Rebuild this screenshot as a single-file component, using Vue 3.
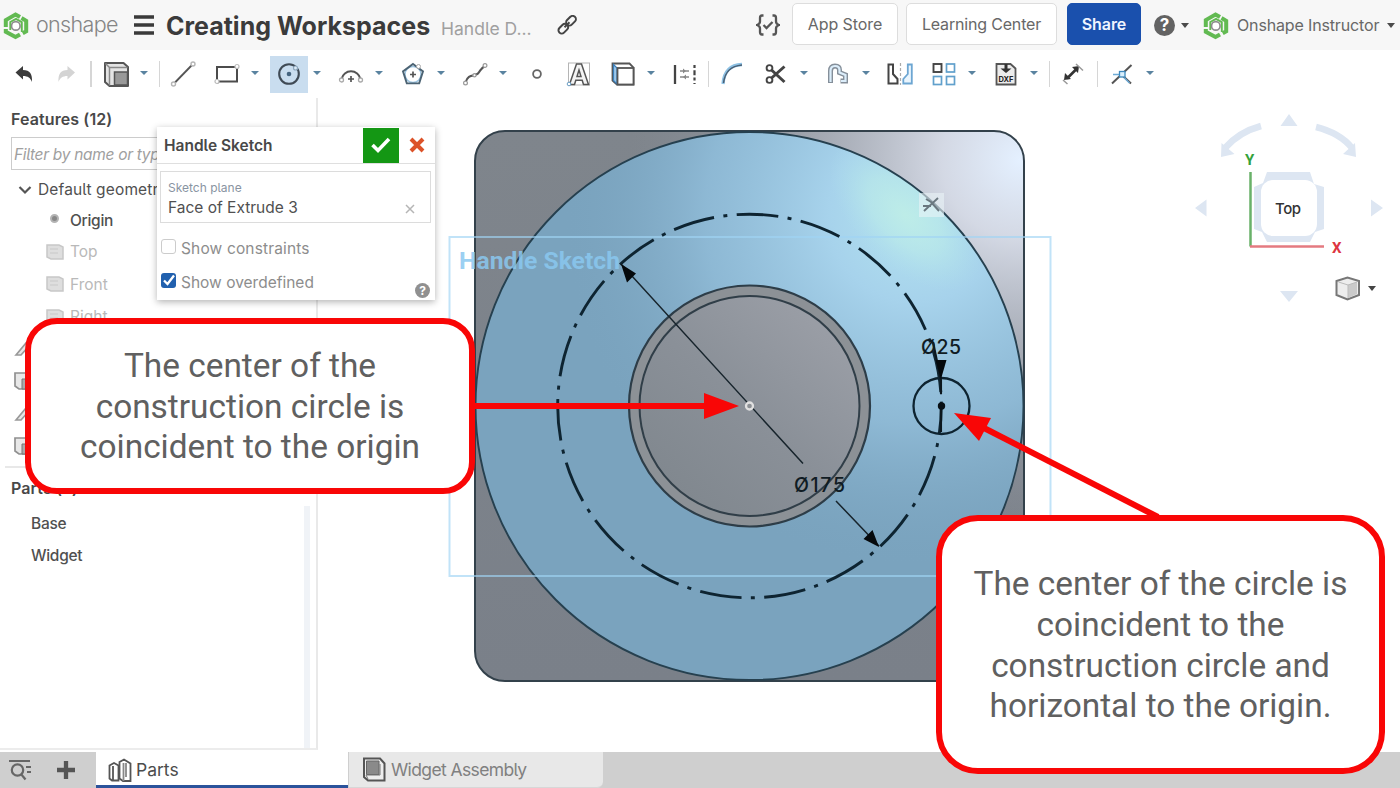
<script setup>
const tools = [
  { icon: 'undo' },
  { icon: 'redo' },
  { sep: 'w8' },
  { icon: 'sketch', menu: true },
  { sep: 'w5' },
  { icon: 'line', wide: true },
  { icon: 'rect', menu: true },
  { icon: 'circle', menu: true, active: true },
  { icon: 'arc', menu: true },
  { icon: 'polygon', menu: true },
  { icon: 'spline', menu: true },
  { icon: 'point' },
  { icon: 'text', wide: true },
  { icon: 'project', menu: true },
  { icon: 'dimension' },
  { sep: 'w5' },
  { icon: 'fillet', wide: true },
  { icon: 'trim', menu: true },
  { icon: 'offset', menu: true },
  { icon: 'mirror', wide: true },
  { icon: 'pattern', menu: true },
  { icon: 'dxf', menu: true },
  { sep: 'w5' },
  { icon: 'measure' },
  { sep: 'w7' },
  { icon: 'constraint', menu: true },
]
const planes = ['Top', 'Front', 'Right']
const steps = ['sk', 'ex', 'sk', 'ex']
const parts = ['Base', 'Widget']
</script>

<template>
  <div class="app">
    <svg class="defs" width="0" height="0">
      <symbol id="i-logo" viewBox="0 0 28 28">
        <g fill="none" stroke="#62ba52" stroke-width="4">
          <path d="M3.800 15.500V8.600L13.500 3l4.500 2.600" />
          <path d="M3.800 17.500v2.700L13.500 25.500l4.500-2.600" />
          <path d="M19.500 6.600l4.700 2.700v10.500l-3.500 2" />
        </g>
        <path d="M8.300 18.500v-8L14 7.300l5.800 3.300v10" fill="none" stroke="#62ba52" stroke-width="1.900" />
        <circle cx="13.800" cy="14.400" r="4.300" fill="#fff" stroke="#8d8d8d" stroke-width="1.700" />
      </symbol>
      <symbol id="i-undo" viewBox="0 0 28 28"><path d="M5.500 12.500L13 6v4c7 0 9.500 4 9 12-1.500-4-4-6-9-6v3.500z" fill="#3c3c3c" /></symbol>
      <symbol id="i-redo" viewBox="0 0 28 28"><path d="M23 12.500L15.500 6v4c-7 0-9.500 4-9 12 1.500-4 4-6 9-6v3.500z" fill="#d4d4d4" /></symbol>
      <symbol id="i-sketch" viewBox="0 0 28 28">
        <path d="M3 3h18.500L26 7v19H7.500L3 22z" fill="#e4e4e4" stroke="#555" stroke-width="2" stroke-linejoin="round" />
        <path d="M3.500 3.500L7.500 7.500V25.500M7.500 7.500H25.500" fill="none" stroke="#888" stroke-width="1.500" />
        <rect x="12.500" y="12" width="13" height="13" fill="#999" stroke="#555" stroke-width="1.500" />
      </symbol>
      <symbol id="i-line" viewBox="0 0 28 28">
        <path d="M6 22.500L22.500 5.500" stroke="#555" stroke-width="1.800" />
        <g fill="#fff" stroke="#b5b5b5" stroke-width="1.400"><circle cx="4.500" cy="24" r="2" /><circle cx="24" cy="4" r="2" /></g>
      </symbol>
      <symbol id="i-rect" viewBox="0 0 28 28">
        <rect x="4" y="7" width="20" height="14.500" fill="#fff" stroke="#4c4c4c" stroke-width="2" />
        <g fill="#fff" stroke="#bbb" stroke-width="1.200"><circle cx="4" cy="21.500" r="2" /><circle cx="24" cy="6.500" r="2" /></g>
      </symbol>
      <symbol id="i-circle" viewBox="0 0 28 28">
        <circle cx="14" cy="14" r="9.800" fill="none" stroke="#3f4a55" stroke-width="2.100" />
        <circle cx="14" cy="14" r="2.300" fill="#45647f" />
        <circle cx="20.500" cy="8" r="2" fill="#dbe9f5" stroke="#8fa9bf" stroke-width="1.200" />
      </symbol>
      <symbol id="i-arc" viewBox="0 0 28 28">
        <path d="M4.500 19A9.700 9.700 0 0 1 23.500 19" fill="none" stroke="#555" stroke-width="2" />
        <path d="M14 16v6M11 19h6" stroke="#555" stroke-width="1.700" />
        <g fill="#fff" stroke="#aaa" stroke-width="1.300"><circle cx="4.500" cy="20" r="2" /><circle cx="23.500" cy="20" r="2" /></g>
      </symbol>
      <symbol id="i-polygon" viewBox="0 0 28 28">
        <circle cx="14" cy="14.500" r="8" fill="none" stroke="#9cc5e2" stroke-width="1.500" />
        <path d="M14 4l10 7.400-3.800 12H7.800L4 11.400z" fill="none" stroke="#4c6373" stroke-width="1.900" />
        <path d="M14 11.500v6M11 14.500h6" stroke="#555" stroke-width="1.700" />
        <circle cx="19.500" cy="6.500" r="2" fill="#fff" stroke="#aaa" />
      </symbol>
      <symbol id="i-spline" viewBox="0 0 28 28">
        <path d="M4.500 22.500C7 13 14 17 17 13.500S20 8 24 6" fill="none" stroke="#555" stroke-width="2.100" />
        <g fill="#fff" stroke="#999" stroke-width="1.200"><circle cx="4.500" cy="23" r="1.900" /><circle cx="13.500" cy="15.300" r="1.600" /><circle cx="24" cy="5.500" r="1.900" /></g>
      </symbol>
      <symbol id="i-point" viewBox="0 0 28 28"><circle cx="14" cy="14" r="3.900" fill="#fff" stroke="#666" stroke-width="1.800" /></symbol>
      <symbol id="i-text" viewBox="0 0 28 28">
        <rect x="3.500" y="3" width="21" height="22" fill="none" stroke="#b5b5b5" />
        <path d="M4.500 24.500L11.500 4h5l7 20.500h-5l-1.300-4.200h-6.400l-1.300 4.200zM12 16.500h4l-2-6.500z" fill="#f4f4f4" stroke="#555" stroke-width="1.500" />
        <circle cx="4" cy="24" r="1.800" fill="#fff" stroke="#6a9ec4" />
      </symbol>
      <symbol id="i-project" viewBox="0 0 28 28">
        <path d="M3.500 3.500h17l4 4v17H8l-4.500-4z" fill="#fff" stroke="#555" stroke-width="1.800" />
        <path d="M4.500 4.500L8 8v16l-3.500-3.500z" fill="#9cc8ec" stroke="#3b80bd" stroke-width="1.200" />
        <rect x="8.500" y="8" width="16" height="16.500" fill="#fff" stroke="#555" stroke-width="1.800" />
      </symbol>
      <symbol id="i-dimension" viewBox="0 0 28 28">
        <path d="M4 5v19" stroke="#444" stroke-width="2.300" />
        <path d="M9 11h9M9 17h9" stroke="#888" stroke-width="1.400" />
        <path d="M12 8.500l3 2.500-3 2.500zM15 14.500l-3 2.500 3 2.500z" fill="#888" />
        <path d="M23.500 5v19" stroke="#444" stroke-width="2.200" stroke-dasharray="3 2.300 5 2.300" />
      </symbol>
      <symbol id="i-fillet" viewBox="0 0 28 28"><path d="M5 24C6 11 12 5 24 4.500" fill="none" stroke="#8dc1e4" stroke-width="3.300" /><path d="M5.500 23C7 11 13 6 24 5" fill="none" stroke="#4a6075" stroke-width="1.500" /></symbol>
      <symbol id="i-trim" viewBox="0 0 28 28">
        <path d="M9 9.500L22.500 22M9 18.500L22.500 6.500" stroke="#444" stroke-width="3" />
        <g fill="none" stroke="#444" stroke-width="1.900"><circle cx="7.500" cy="8" r="2.900" /><circle cx="7.500" cy="20" r="2.900" /></g>
      </symbol>
      <symbol id="i-offset" viewBox="0 0 28 28">
        <path d="M6.500 23V11q0-5 4.500-5t4.500 4v2.500l6 2.500V21h-5" fill="none" stroke="#858f9a" stroke-width="5" />
        <path d="M6.500 22V11q0-5 4.500-5t4.500 4v2.500l6 2.500V21h-4.500" fill="none" stroke="#dceefb" stroke-width="2.200" />
      </symbol>
      <symbol id="i-mirror" viewBox="0 0 28 28">
        <path d="M2.500 4.500h4.500v9.500l4.500 5v4.500h-9z" fill="#fff" stroke="#444" stroke-width="2" />
        <path d="M25.800 4.500h-4v9.500l-4.500 5v4.500h8.500z" fill="#eaf5fd" stroke="#6da6d2" stroke-width="1.800" />
        <path d="M14.500 3v22" stroke="#aaa" stroke-width="1.200" stroke-dasharray="3 2" />
      </symbol>
      <symbol id="i-pattern" viewBox="0 0 28 28">
        <g fill="#fff" stroke="#61a0cc" stroke-width="1.700"><rect x="16.500" y="4" width="8" height="8" /><rect x="3.500" y="16.500" width="8" height="8" /><rect x="16.500" y="16.500" width="8" height="8" /></g>
        <rect x="3.500" y="4" width="8" height="8" fill="#fff" stroke="#444" stroke-width="1.900" />
      </symbol>
      <symbol id="i-measure" viewBox="0 0 28 28">
        <path d="M8 18.500L18.500 8" stroke="#333" stroke-width="2.600" />
        <path d="M5 20l1-7 6 6zM20 6l-1 7-6-6z" fill="#333" />
        <path d="M4 20l4.500 4M17 4l7 6.500" stroke="#999" stroke-width="1.500" />
      </symbol>
      <symbol id="i-constraint" viewBox="0 0 28 28">
        <path d="M4 23.500L23.500 5M14.500 15.500L23 23.500" stroke="#555" stroke-width="2" />
        <path d="M5 14.500h9M16 17.500l5.500 5.500" stroke="#6eabd6" stroke-width="1.600" />
        <rect x="11.500" y="11.500" width="5.500" height="5.500" fill="#d9effc" stroke="#3d87bb" stroke-width="1.300" />
      </symbol>
      <symbol id="i-sk" viewBox="0 0 20 20"><path d="M3 16L13 4l3 3-8 9z" fill="#e6e6e6" stroke="#999" stroke-width="1.700" /></symbol>
      <symbol id="i-ex" viewBox="0 0 20 20"><path d="M2 2h13l3 3v13H6l-4-3z" fill="#e8e8e8" stroke="#909090" stroke-width="1.700" /><path d="M9 8h9v10H9z" fill="#aaa" stroke="#777" /></symbol>
    </svg>

    <header class="header">
      <svg class="logo" width="28" height="29"><use href="#i-logo" /></svg>
      <span class="brand">onshape</span>
      <svg class="burger" width="20" height="20"><path d="M0 2h20M0 10h20M0 18h20" stroke="#3a3a3a" stroke-width="3.300" /></svg>
      <span class="title">Creating Workspaces</span>
      <span class="subtitle">Handle D...</span>
      <svg class="link" width="20" height="20" viewBox="0 0 20 20" fill="none" stroke="#444" stroke-width="2">
        <rect x="8.500" y="2.500" width="11" height="6.500" rx="3.200" transform="rotate(-45 14 5.700)" />
        <rect x="0.800" y="10.500" width="11" height="6.500" rx="3.200" transform="rotate(-45 6.300 13.700)" />
        <path d="M7.500 12.300l5-5" />
      </svg>
      <svg class="braces" width="24" height="24" viewBox="0 0 24 24" fill="none" stroke="#555" stroke-width="2.300">
        <path d="M7.500 2.500H6Q4 2.500 4 5v3.500Q4 11 1 12q3 1 3 3.500V19q0 2.500 2 2.500h1.500M16.500 2.500H18q2 0 2 2.500v3.500q0 2.500 3 3.500-3 1-3 3.500V19q0 2.500-2 2.500h-1.500" />
        <path d="M7.500 12l3 3 6-6" />
      </svg>
      <button class="btn store">App Store</button>
      <button class="btn learn">Learning Center</button>
      <button class="btn share">Share</button>
      <span class="help">?</span>
      <i class="caret dark"></i>
      <svg class="avatar" width="28" height="29"><use href="#i-logo" /></svg>
      <span class="user">Onshape Instructor</span>
      <i class="caret dark"></i>
    </header>

    <nav class="toolbar">
      <template v-for="(t, i) in tools" :key="i">
        <span v-if="t.sep" class="sep" :class="t.sep"></span>
        <span v-else class="tool" :class="{ menu: t.menu, wide: t.wide }">
          <span class="tool-box" :class="{ active: t.active }">
            <svg v-if="t.icon === 'dxf'" width="28" height="28" viewBox="0 0 28 28">
              <path d="M4.500 4h14l5 4.500v16h-19z" fill="#ececec" stroke="#555" stroke-width="1.800" />
              <path d="M12.500 4h3v4.500h4L14 13 8.500 8.500h4z" fill="#333" />
              <text x="6.500" y="22.300" textLength="15" class="dxf">DXF</text>
            </svg>
            <svg v-else width="28" height="28"><use :href="'#i-' + t.icon" /></svg>
          </span>
          <i v-if="t.menu" class="caret blue"></i>
        </span>
      </template>
    </nav>

    <main class="work">
      <aside class="panel">
        <section class="features">
          <h2>Features (12)</h2>
          <div class="filter">Filter by name or type</div>
          <div class="row group">
            <svg width="14" height="10" viewBox="0 0 14 10"><path d="M1.500 2L7 7.500 12.500 2" fill="none" stroke="#555" stroke-width="2.200" /></svg>
            <span>Default geometry</span>
          </div>
          <div class="row origin"><i class="dot"></i><span>Origin</span></div>
          <div v-for="p in planes" :key="p" class="row plane">
            <svg width="18" height="16"><path d="M1 1h12l4 2v12H5l-4-2z" fill="#dedede" stroke="#c8c8c8" stroke-width="1.500" /><path d="M4 5h8M4 9h8" stroke="#c8c8c8" /></svg>
            <span>{{ p }}</span>
          </div>
          <div v-for="(s, i) in steps" :key="i" class="row step"><svg width="20" height="20"><use :href="'#i-' + s" /></svg></div>
        </section>
        <section class="parts">
          <h2>Parts (2)</h2>
          <div v-for="p in parts" :key="p" class="row part">{{ p }}</div>
        </section>
      </aside>

      <svg class="canvas" viewBox="318 98 1082 654">
        <defs>
          <linearGradient id="plate" x1="0" y1="0" x2="0" y2="1"><stop offset="0" stop-color="#7f858c" /><stop offset="1" stop-color="#7a8089" /></linearGradient>
          <radialGradient id="plateShine" gradientUnits="userSpaceOnUse" cx="1020" cy="160" r="390">
            <stop offset="0" stop-color="#e4f0ff" /><stop offset=".2" stop-color="#dbe0ec" stop-opacity=".92" /><stop offset=".55" stop-color="#b0b5c0" stop-opacity=".65" /><stop offset="1" stop-color="#8a909a" stop-opacity="0" />
          </radialGradient>
          <radialGradient id="ringShine" gradientUnits="userSpaceOnUse" cx="915" cy="215" r="350">
            <stop offset="0" stop-color="#b4e4f0" /><stop offset=".25" stop-color="#a9d5ee" stop-opacity=".95" /><stop offset=".6" stop-color="#98c4e0" stop-opacity=".65" /><stop offset="1" stop-color="#7ba5c0" stop-opacity="0" />
          </radialGradient>
          <radialGradient id="glow" gradientUnits="userSpaceOnUse" cx="0" cy="0" r="1" gradientTransform="translate(905 215) rotate(45) scale(95 50)">
            <stop offset="0" stop-color="#bfeee6" stop-opacity=".85" /><stop offset=".5" stop-color="#bbebe8" stop-opacity=".55" /><stop offset="1" stop-color="#b0e0ec" stop-opacity="0" />
          </radialGradient>
          <linearGradient id="hub" x1="1" y1="0" x2="0.200" y2="0.900"><stop offset="0" stop-color="#a0a3ab" /><stop offset=".6" stop-color="#8a9098" /><stop offset="1" stop-color="#81888f" /></linearGradient>
        </defs>
        <rect x="475" y="131" width="549" height="550" rx="30" fill="url(#plate)" />
        <rect x="475" y="131" width="549" height="550" rx="30" fill="url(#plateShine)" stroke="#33414b" stroke-width="2" />
        <circle cx="749.500" cy="406" r="274" fill="#7aa3be" />
        <circle cx="749.500" cy="406" r="274" fill="url(#ringShine)" />
        <circle cx="749.500" cy="406" r="274" fill="url(#glow)" stroke="#26404f" stroke-width="1.900" />
        <circle cx="749.500" cy="406" r="120.500" fill="#8c9196" stroke="#2d3d48" stroke-width="2.200" />
        <circle cx="749.500" cy="406" r="110" fill="url(#hub)" stroke="#303e48" stroke-width="2" />
        <rect x="449.500" y="237" width="601" height="339" fill="none" stroke="#9fd4f5" stroke-opacity=".65" stroke-width="2" />
        <text x="459" y="269" textLength="161" lengthAdjust="spacingAndGlyphs" class="sk-label">Handle Sketch</text>
        <circle cx="749.500" cy="406" r="191.800" fill="none" stroke="#0e2431" stroke-width="2.900" stroke-dasharray="41.800 9.400 4 9.400" stroke-dashoffset="13.800" />
        <path d="M621 264L803 463.500M836 501L879 546" stroke="#17242c" stroke-width="1.500" />
        <path d="M621 264l15 9.500-9 9zM879 547l-15.500-8 9-9z" fill="#05090c" />
        <circle cx="749.500" cy="406" r="3.500" fill="#8b8f94" stroke="#e0e0e0" stroke-width="2.300" />
        <text x="794" y="491.500" textLength="51" class="dim">Ø175</text>
        <circle cx="941.500" cy="406" r="28" fill="none" stroke="#0e2431" stroke-width="2.300" />
        <path d="M933 342L941 380v52" fill="none" stroke="#0c171e" stroke-width="2.100" stroke-dasharray="53 10 40" />
        <path d="M935.500 360h11L941 379z" fill="#05090c" />
        <circle cx="941.500" cy="406" r="3.700" fill="#081015" />
        <text x="921" y="353.500" textLength="40" class="dim">Ø25</text>
        <rect x="919" y="193" width="25" height="24" fill="#e9f3f6" fill-opacity=".6" />
        <path d="M924 211l14-13M926 199l5 3 8 9M923 206h8" stroke="#6b7880" stroke-width="1.900" fill="none" />

        <g fill="#dde6f2">
          <path d="M1289 114l8.500 12h-17zM1289 302l9-11h-18zM1195 208l11.500-8.500v17zM1383 208l-12-8.500v17zM1221 157l.5-14 13 11zM1356 157l-1-14-12 11z" />
          <path d="M1225 148q14-16 36-22M1352 148q-12-15-36-21" fill="none" stroke="#dde6f2" stroke-width="6.500" />
          <path d="M1267 172h43l4 12 10 3v42l-9 3-5 10h-43l-5-10-8-3v-42l9-4z" />
        </g>
        <rect x="1261" y="180" width="56" height="56" rx="12" fill="#fff" />
        <text x="1275" y="213.500" textLength="26" class="face">Top</text>
        <path d="M1250.500 172v74.500" stroke="#69b169" stroke-width="2.500" /><path d="M1250 246.500h74" stroke="#e47a80" stroke-width="2.500" />
        <text x="1245" y="165" class="axis" fill="#34a23c">Y</text>
        <text x="1332" y="253" class="axis" fill="#dd3541">X</text>
        <path d="M1336.500 281l11-3.500 11.500 3.500v14l-11.500 4.500-11-4.500z" fill="#ededed" stroke="#777" stroke-width="2" />
        <path d="M1348 285l9-3v12l-9 4z" fill="#cacaca" /><path d="M1338.500 282l9.500 3 9-3M1348 285v13" stroke="#bbb" fill="none" />
        <path d="M1368 286h8l-4 5z" fill="#444" />
      </svg>

      <div class="dialog">
        <div class="dialog-head">
          <span class="dialog-title">Handle Sketch</span>
          <span class="ok"><svg width="22" height="18" viewBox="0 0 22 18"><path d="M2.500 9L8 14.500 19 3" fill="none" stroke="#fff" stroke-width="3.600" /></svg></span>
          <svg class="cancel" width="16" height="16" viewBox="0 0 16 16"><path d="M2 2l12 12M14 2L2 14" stroke="#dc5228" stroke-width="4" /></svg>
        </div>
        <div class="field">
          <div class="field-label">Sketch plane</div>
          <div class="field-value">Face of Extrude 3</div>
          <svg width="10" height="10"><path d="M1 1l8 8M9 1L1 9" stroke="#b5b5b5" stroke-width="1.500" /></svg>
        </div>
        <div class="check c1"><i class="box"></i><span>Show constraints</span></div>
        <div class="check c2"><i class="box on"><svg width="15" height="15"><path d="M3 7.500l3.500 3.500L13 2.500" fill="none" stroke="#fff" stroke-width="2.300" /></svg></i><span>Show overdefined</span></div>
        <span class="mini-help">?</span>
      </div>
    </main>

    <footer class="tabs">
      <svg class="tab-search" width="22" height="22" viewBox="0 0 22 22" fill="none" stroke="#666" stroke-width="2.200"><path d="M0 2h21M17 8h5M18 13h4" /><circle cx="8.500" cy="11" r="5.700" /><path d="M12 15l4.500 5.500" /></svg>
      <svg class="tab-add" width="18" height="18"><path d="M9 0v18M0 9h18" stroke="#555" stroke-width="4.300" /></svg>
      <div class="tab current">
        <svg width="24" height="24" viewBox="0 0 24 24" fill="#fff" stroke="#555" stroke-width="1.800"><path d="M1.500 7.500L6 5l4.500 2.500v15H4l-2.500-2z" /><path d="M5 8v14" /><path d="M11.500 4L16 1.500l6.500 4V23H15l-3.500-2.500z" /><path d="M15.500 5v18M18 5v14" stroke="#888" /></svg>
        <span>Parts</span>
      </div>
      <div class="tab other">
        <svg width="24" height="25" viewBox="0 0 24 25"><path d="M2 1.500h16l4.500 5V23.500H6L2 20z" fill="#eee" stroke="#555" stroke-width="2" /><path d="M4.500 4h12.500v13.500H4.500z" fill="#8a8a8a" stroke="#666" /><path d="M6 22L4 18h14V7" fill="none" stroke="#777" /></svg>
        <span>Widget Assembly</span>
      </div>
    </footer>

    <svg class="arrows" viewBox="0 0 1400 788">
      <path d="M474 406H706" stroke="#f90606" stroke-width="6" /><path d="M704 393l35 13-35 13z" fill="#f90606" />
      <path d="M1158 517L984 428" stroke="#f90606" stroke-width="6" /><path d="M954 413l37 5-12 23z" fill="#f90606" />
    </svg>
    <div class="callout one"><span>The center of the</span><span>construction circle is</span><span>coincident to the origin</span></div>
    <div class="callout two"><span>The center of the circle is</span><span>coincident to the</span><span>construction circle and</span><span>horizontal to the origin.</span></div>
  </div>
</template>

<style>
body { background: #fff; }
</style>

<style scoped>
.app { position: relative; width: 1400px; height: 788px; overflow: hidden; display: flex; flex-direction: column; background: #fff; font-family: Inter, Roboto, sans-serif; font-feature-settings: "cv05"; color: #505050; }
.defs { position: absolute; }
svg { flex: none; display: block; }
.header { height: 50px; background: #f7f7f7; display: flex; align-items: center; white-space: nowrap; flex: none; box-sizing: border-box; }
.logo { margin-left: 2px; }
.brand { width: 82px; margin-left: 6px; font-size: 21.500px; color: #858585; letter-spacing: -.65px; font-weight: 300; line-height: 48px; height: 50px; }
.burger { margin-left: 16px; }
.title { width: 264px; margin-left: 12px; font-size: 25px; font-weight: 700; color: #3b3b3b; letter-spacing: 0; padding-top: 2px; }
.subtitle { width: 92px; margin-left: 11px; padding-top: 6px; font-size: 17.500px; color: #a0a0a0; font-weight: 400; }
.link { margin-left: 24px; }
.braces { margin-left: 179px; }
.btn { font: inherit; height: 42px; padding: 0; box-sizing: border-box; border: 1.500px solid #ddd; border-radius: 5px; background: #fff; font-size: 16px; color: #686868; margin-top: -2px; letter-spacing: -.1px; }
.store { width: 106px; margin-left: 12px; }
.learn { width: 151px; margin-left: 8px; letter-spacing: -.18px; }
.share { width: 74px; margin-left: 10px; background: #1a50ad; border-color: #1a50ad; color: #f0f5ff; font-weight: 600; }
.help { margin-left: 13px; width: 21px; height: 21px; border-radius: 50%; background: #636363; color: #fff; font-weight: 700; font-size: 17px; line-height: 21px; text-align: center; }
.caret { width: 0; height: 0; border: 4px solid transparent; border-top: 5px solid #47606f; border-bottom: 0; }
.caret.dark { border-top-color: #4b4b4b; margin-left: 6px; }
.caret.blue { margin-left: 5px; border-top-color: #5a83a0; margin-top: -2px; border-top-width: 4.500px; }
.avatar { margin-left: 13px; }
.user { width: 144px; margin-left: 7px; font-size: 16px; color: #686868; letter-spacing: -.15px; }

.toolbar { height: 48px; padding-left: 3px; display: flex; align-items: center; flex: none; }
.tool { width: 42px; display: flex; align-items: center; flex: none; }
.tool.menu { width: 62px; }
.tool.wide { margin-right: 2px; }
.tool-box { width: 38px; height: 37px; margin-left: 2px; display: flex; align-items: center; justify-content: center; }
.tool-box.active { background: #c9ddef; }
.dxf { font: 700 7.500px Inter, sans-serif; fill: #222; }
.sep { display: flex; justify-content: center; flex: none; height: 26px; }
.sep::before { content: ""; width: 1.500px; background: #d6d6d6; }
.w5 { width: 5px; } .w7 { width: 7px; } .w8 { width: 8px; }

.work { position: relative; flex: 1; display: flex; min-height: 0; }
.panel { width: 318px; box-sizing: border-box; border-right: 2px solid #e9e9e9; border-bottom: 2px solid #ececec; height: 652px; display: flex; flex-direction: column; font-size: 15.500px; }
.canvas { width: 1082px; height: 654px; }
h2 { margin: 0; font-size: 16px; font-weight: 600; line-height: 22px; color: #484848; letter-spacing: .1px; }
.features { height: 370px; margin: 0 5px; padding: 10px 0 0 6px; border-bottom: 2px solid #e8e8e8; box-sizing: border-box; overflow: hidden; flex: none; }
.filter { margin: 7px 0 0; height: 33px; box-sizing: border-box; border: 1.500px solid #ccc; padding-left: 2px; line-height: 34px; font-size: 15.500px; font-style: italic; color: #a0a0a0; letter-spacing: -.3px; }
.row { display: flex; align-items: center; height: 32px; white-space: nowrap; }
.group { height: 35px; padding: 4px 0 0 7px; gap: 6px; box-sizing: border-box; font-size: 15.500px; letter-spacing: .15px; }
.origin { height: 30px; padding-left: 39px; font-weight: 500; letter-spacing: -.3px; }
.dot { width: 5px; height: 5px; border-radius: 50%; border: 2px solid #b4b4b4; background: #888; margin-right: 11px; margin-bottom: 4px; }
.plane { height: 32.500px; padding: 1px 0 0 35px; gap: 6px; color: #b9b9b9; box-sizing: border-box; }
.step { height: 32.500px; padding-left: 2px; }
.parts { padding: 9px 4px 0 11px; flex: 1; background: linear-gradient(#f0f3f7, #f0f3f7) no-repeat 304px 38px / 6px 100%; }
.part { padding-left: 20px; height: 32px; font-size: 15.500px; font-weight: 500; letter-spacing: -.3px; }
.parts h2 + .row { margin-top: 8px; }

.dialog { position: absolute; left: 157px; top: 29px; width: 278px; height: 173px; background: #fff; box-shadow: 0 2px 7px rgba(0, 0, 0, .3); }
.dialog-head { height: 36px; display: flex; align-items: center; border-bottom: 1.500px solid #dfdfdf; }
.dialog-title { width: 199px; margin-left: 7px; font-size: 15.500px; font-weight: 600; letter-spacing: 0; color: #484848; }
.ok { width: 36px; height: 35px; background: #149714; display: flex; align-items: center; justify-content: center; }
.cancel { margin-left: 10px; }
.field { margin: 7px 4px 0 3px; height: 52px; box-sizing: border-box; border: 1.500px solid #dcdcdc; position: relative; padding: 7px 0 0 7px; }
.field-label { font-size: 12px; line-height: 17px; color: #8994a2; }
.field-value { font-size: 15.500px; line-height: 24px; color: #505050; }
.field svg { position: absolute; right: 15px; top: 32px; }
.check { display: flex; align-items: center; gap: 5px; margin-left: 4px; height: 22px; font-size: 15.500px; color: #8d8d8d; }
.c1 { margin-top: 14px; letter-spacing: .15px; }
.c2 { margin-top: 12px; }
.box { width: 15px; height: 15px; box-sizing: border-box; border: 1.500px solid #ccc; border-radius: 3px; margin-top: -4px; }
.box.on { border: 0; background: #2160ae; }
.mini-help { position: absolute; right: 5px; bottom: 2px; width: 15px; height: 15px; border-radius: 50%; background: #909090; color: #fff; font-size: 12px; font-weight: 700; line-height: 15px; text-align: center; }

.sk-label { font: 700 24px Roboto, sans-serif; fill: #8ac8f0; fill-opacity: .85; }
.dim { font: 500 19.500px Inter, sans-serif; fill: #101c24; }
.face { font: 500 15px Inter, sans-serif; fill: #333; }
.axis { font: 700 15px Roboto, sans-serif; }

.tabs { height: 36px; background: #cfcfcf; display: flex; align-items: center; flex: none; font-size: 17.500px; }
.tab-search { margin-left: 9px; }
.tab-add { margin-left: 26px; }
.tab { height: 36px; box-sizing: border-box; display: flex; align-items: center; gap: 4px; white-space: nowrap; }
.current { width: 252px; margin-left: 21px; padding-left: 12px; background: #fff; border-bottom: 3px solid #2b539b; color: #4c4c4c; padding-top: 2px; }
.other { width: 254px; margin-left: 1px; padding-left: 13px; background: #e8e8e8; color: #808080; gap: 5px; border-bottom: 1px solid #d7d7d7; border-radius: 0 0 6px 0; letter-spacing: -.62px; }

.arrows { position: absolute; left: 0; top: 0; width: 1400px; height: 788px; }
.callout { position: absolute; box-sizing: border-box; border: 6px solid #f90606; background: #fff; display: flex; flex-direction: column; align-items: center; justify-content: center; font: 33.400px/40.800px Roboto, sans-serif; color: #606060; white-space: nowrap; }
.callout span { position: relative; top: 1px; }
.one { left: 25px; top: 318px; width: 450px; height: 176px; border-radius: 32px; }
.two { left: 936px; top: 515px; width: 449px; height: 259px; border-radius: 42px; }
</style>
